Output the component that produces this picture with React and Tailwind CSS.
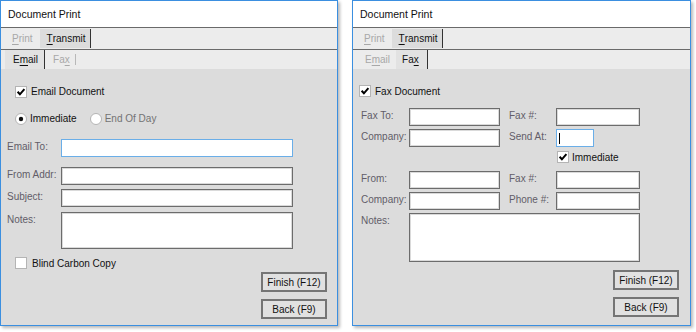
import React from 'react';

const font = { fontFamily: '"Liberation Sans", Arial, sans-serif' };

const Check = ({ checked }) => (
    <svg width="12" height="12" viewBox="0 0 12 12" className="shrink-0">
        <rect x="0.5" y="0.5" width="11" height="11" fill="#fff" stroke="#b4b4b4" />
        {checked && <path d="M2.6 5.8 L4.9 8.3 L9.4 3.2" stroke="#000" strokeWidth="2" fill="none" />}
    </svg>
);

const Radio = ({ checked }) => (
    <svg width="12" height="12" viewBox="0 0 12 12" className="shrink-0">
        <circle cx="6" cy="6" r="5.5" fill="#fff" stroke="#b4b4b4" />
        {checked && <circle cx="6" cy="6" r="2.2" fill="#111" />}
    </svg>
);

const Input = ({ w, h = 'h-[18px]', focus, children }) => (
    <div className={`${w} ${h} bg-white border ${focus ? 'border-[#6aaee8]' : 'border-[#6c6c6c] shadow-[inset_0_0_0_1px_#dadada]'} shrink-0 flex items-center`}>
        {children}
    </div>
);

const Label = ({ w, children }) => (
    <div className={`${w} shrink-0 text-[10px] leading-[13px] pt-[1px] text-[#625d68]`}>{children}</div>
);

const Button = ({ children }) => (
    <div className="self-end w-[66px] h-[20px] bg-[#e1e1e1] border-2 border-[#757575] flex items-center justify-center text-[10px] text-[#111]">
        {children}
    </div>
);

const Mn = ({ children }) => <span className="underline underline-offset-2">{children}</span>;

const Window = ({ width, sub, children }) => (
    <div className={`${width} h-[326px] flex flex-col border border-[#3b8fe0] bg-[#dcdcdc] shadow-[2px_2px_3px_rgba(0,0,0,0.28)]`}>
        <div className="h-[27px] bg-white border-b border-[#6a6a6a] flex items-center pl-[7px] pt-[2px] text-[10.5px] text-[#111]">
            Document Print
        </div>
        <div className="h-[22px] bg-[#ececec] border-b border-[#6a6a6a] flex items-stretch text-[10px]">
            <div className="pl-[11px] pr-[7px] flex items-center text-[#a8a8a8]"><Mn>P</Mn>rint</div>
            <div className="my-[1px] pl-[7px] pr-[5px] bg-[#dcdcdc] border-r border-[#333] flex items-center text-[#111]"><Mn>T</Mn>ransmit</div>
        </div>
        <div className="h-[19px] bg-[#ececec] flex items-stretch text-[10px] pl-[4px]">
            {sub === 'email' ? (
                <>
                    <div className="pl-[8px] pr-[6px] bg-[#e2e2e2] border-r border-[#333] flex items-center text-[#111]">E<Mn>m</Mn>ail</div>
                    <div className="pl-[8px] pr-[5px] flex items-center text-[#a8a8a8]">Fa<Mn>x</Mn></div>
                    <div className="w-px my-[4px] bg-[#b8b8b8]" />
                </>
            ) : (
                <>
                    <div className="pl-[8px] pr-[6px] flex items-center text-[#a8a8a8]">E<Mn>m</Mn>ail</div>
                    <div className="pl-[6px] pr-[8px] bg-[#e2e2e2] border-r border-[#333] flex items-center text-[#111]">Fa<Mn>x</Mn></div>
                </>
            )}
        </div>
        <div className="flex-1 flex flex-col">{children}</div>
    </div>
);

const EmailForm = () => (
    <div className="flex flex-col pl-[6px] pr-[10px] text-[10px] text-[#111]">
        <div className="mt-[16px] h-[13px] flex items-center gap-[4px] ml-[8px]">
            <Check checked />
            <span>Email Document</span>
        </div>
        <div className="mt-[14px] h-[13px] flex items-center ml-[8px]">
            <Radio checked />
            <span className="ml-[3px]">Immediate</span>
            <div className="ml-[13px]"><Radio /></div>
            <span className="ml-[3px] text-[#737373]">End Of Day</span>
        </div>
        <div className="mt-[14px] flex">
            <Label w="w-[54px]">Email To:</Label>
            <Input w="w-[232px]" focus />
        </div>
        <div className="mt-[10px] flex">
            <Label w="w-[54px]">From Addr:</Label>
            <Input w="w-[232px]" />
        </div>
        <div className="mt-[4px] flex">
            <Label w="w-[54px]">Subject:</Label>
            <Input w="w-[232px]" />
        </div>
        <div className="mt-[5px] flex">
            <Label w="w-[54px]">Notes:</Label>
            <Input w="w-[232px]" h="h-[37px]" />
        </div>
        <div className="mt-[8px] h-[12px] flex items-center gap-[5px] ml-[8px]">
            <Check />
            <span>Blind Carbon Copy</span>
        </div>
        <div className="mt-[3px] flex flex-col">
            <Button>Finish (F12)</Button>
            <div className="h-[7px]" />
            <Button>Back (F9)</Button>
        </div>
    </div>
);

const Row = ({ l1, l2, w2 = 'w-[84px]', focus2, cursor }) => (
    <div className="flex">
        <Label w="w-[48px]">{l1}</Label>
        <Input w="w-[91px]" />
        <div className="w-[9px]" />
        <Label w="w-[47px]">{l2}</Label>
        <Input w={w2} focus={focus2}>
            {cursor && <div className="ml-[2px] w-px h-[11px] bg-black" />}
        </Input>
    </div>
);

const FaxForm = () => (
    <div className="flex flex-col pl-[8px] pr-[11px] text-[10px] text-[#111]">
        <div className="mt-[16px] h-[12px] flex items-center gap-[4px] -ml-[2px]">
            <Check checked />
            <span>Fax Document</span>
        </div>
        <div className="mt-[11px]">
            <Row l1="Fax To:" l2="Fax #:" />
        </div>
        <div className="mt-[3px]">
            <Row l1="Company:" l2="Send At:" w2="w-[38px]" focus2 cursor />
        </div>
        <div className="mt-[4px] h-[12px] flex items-center gap-[3px] ml-[196px]">
            <Check checked />
            <span>Immediate</span>
        </div>
        <div className="mt-[8px]">
            <Row l1="From:" l2="Fax #:" />
        </div>
        <div className="mt-[3px]">
            <Row l1="Company:" l2="Phone #:" />
        </div>
        <div className="mt-[3px] flex">
            <Label w="w-[48px]">Notes:</Label>
            <Input w="w-[231px]" h="h-[49px]" />
        </div>
        <div className="mt-[8px] flex flex-col">
            <Button>Finish (F12)</Button>
            <div className="h-[7px]" />
            <Button>Back (F9)</Button>
        </div>
    </div>
);

export default function App() {
    return (
        <div className="w-[696px] h-[332px] bg-white flex gap-[14px]" style={font}>
            <Window width="w-[338px]" sub="email">
                <EmailForm />
            </Window>
            <Window width="w-[339px]" sub="fax">
                <FaxForm />
            </Window>
        </div>
    );
}
